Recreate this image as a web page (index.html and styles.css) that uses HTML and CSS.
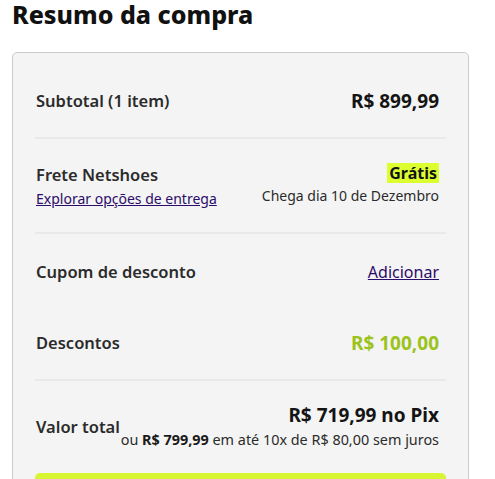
FILE: index.html
```html
<!DOCTYPE html>
<html lang="pt-BR">
<head>
<meta charset="utf-8">
<title>Resumo da compra</title>
<link rel="stylesheet" href="styles.css">
</head>
<body>
<main class="summary">
  <h1 class="title">Resumo da compra</h1>
  <section class="card">
    <div class="row row-subtotal">
      <span class="label">Subtotal (1 item)</span>
      <span class="value">R$ 899,99</span>
    </div>
    <hr class="divider">
    <div class="row row-frete">
      <div class="col-left">
        <span class="label">Frete Netshoes</span>
        <a class="link" href="#">Explorar opções de entrega</a>
      </div>
      <div class="col-right">
        <span class="badge">Grátis</span>
        <span class="note">Chega dia 10 de Dezembro</span>
      </div>
    </div>
    <hr class="divider">
    <div class="row row-cupom">
      <span class="label">Cupom de desconto</span>
      <a class="link link-lg" href="#">Adicionar</a>
    </div>
    <div class="row row-descontos">
      <span class="label">Descontos</span>
      <span class="value value-green">R$ 100,00</span>
    </div>
    <hr class="divider">
    <div class="row row-total">
      <span class="label">Valor total</span>
      <div class="col-right">
        <span class="total">R$ 719,99 no Pix</span>
        <span class="installments">ou <strong>R$ 799,99</strong> em até 10x de R$ 80,00 sem juros</span>
      </div>
    </div>
    <button class="cta" type="button">Continuar</button>
  </section>
</main>
</body>
</html>
```
FILE: styles.css
```css
html, body {
  margin: 0;
  padding: 0;
  background: #ffffff;
}
body {
  font-family: "Noto Sans", "Open Sans", sans-serif;
  color: #2b2b2b;
}
.summary {
  padding: 0 26px 0 12px;
}
.title {
  margin: 0;
  padding-top: 0;
  font-size: 25px;
  line-height: 28px;
  font-weight: 800;
  color: #111111;
  height: 52px;
}
.card {
  background: #f4f4f4;
  border: 1px solid #cccccc;
  border-radius: 5px;
  padding: 11px 22px 0 22px;
}
.row {
  display: flex;
  justify-content: space-between;
  align-items: center;
  padding: 27px 7px 27px 1px;
}
.row-subtotal {
  padding-bottom: 26px;
}
.divider {
  border: 0;
  height: 2px;
  background: #e9e9e9;
  margin: 0;
}
.label {
  font-size: 16.5px;
  line-height: 20px;
  font-weight: 600;
  color: #2b2b2b;
  white-space: nowrap;
}
.value {
  font-size: 19px;
  line-height: 20px;
  font-weight: 700;
  color: #141414;
  white-space: nowrap;
}
.value-green {
  color: #9cc31c;
}
.row-frete {
  padding-top: 24px;
  padding-bottom: 23px;
  align-items: flex-start;
}
.col-left {
  display: flex;
  flex-direction: column;
  gap: 4px;
  padding-top: 2px;
}
.col-right {
  display: flex;
  flex-direction: column;
  align-items: flex-end;
}
.link {
  font-size: 14px;
  line-height: 20px;
  color: #2c0c6a;
  text-decoration: underline;
  white-space: nowrap;
}
.link-lg {
  font-size: 16px;
}
.badge {
  background: #dcff2f;
  font-size: 16px;
  line-height: 20px;
  font-weight: 700;
  color: #141414;
  padding: 0 2px;
}
.note {
  margin-top: 3px;
  font-size: 14px;
  line-height: 20px;
  color: #2b2b2b;
  white-space: nowrap;
}
.row-cupom {
  padding-top: 28px;
  padding-bottom: 25px;
}
.row-descontos {
  padding-top: 26px;
  padding-bottom: 26px;
}
.row-total {
  align-items: center;
  padding-top: 22px;
  padding-bottom: 23px;
  padding-right: 7px;
  padding-left: 1px;
}
.total {
  font-size: 19px;
  line-height: 24px;
  font-weight: 700;
  color: #141414;
  white-space: nowrap;
}
.installments {
  margin-top: 3px;
  font-size: 14.4px;
  line-height: 20px;
  color: #2b2b2b;
  white-space: nowrap;
}
.installments strong {
  font-weight: 700;
  color: #1a1a1a;
}
.cta {
  display: block;
  width: 100%;
  height: 48px;
  border: 0;
  border-radius: 5px;
  background: #d8f531;
  font-family: inherit;
  font-size: 16px;
  font-weight: 700;
  color: #141414;
}
```
